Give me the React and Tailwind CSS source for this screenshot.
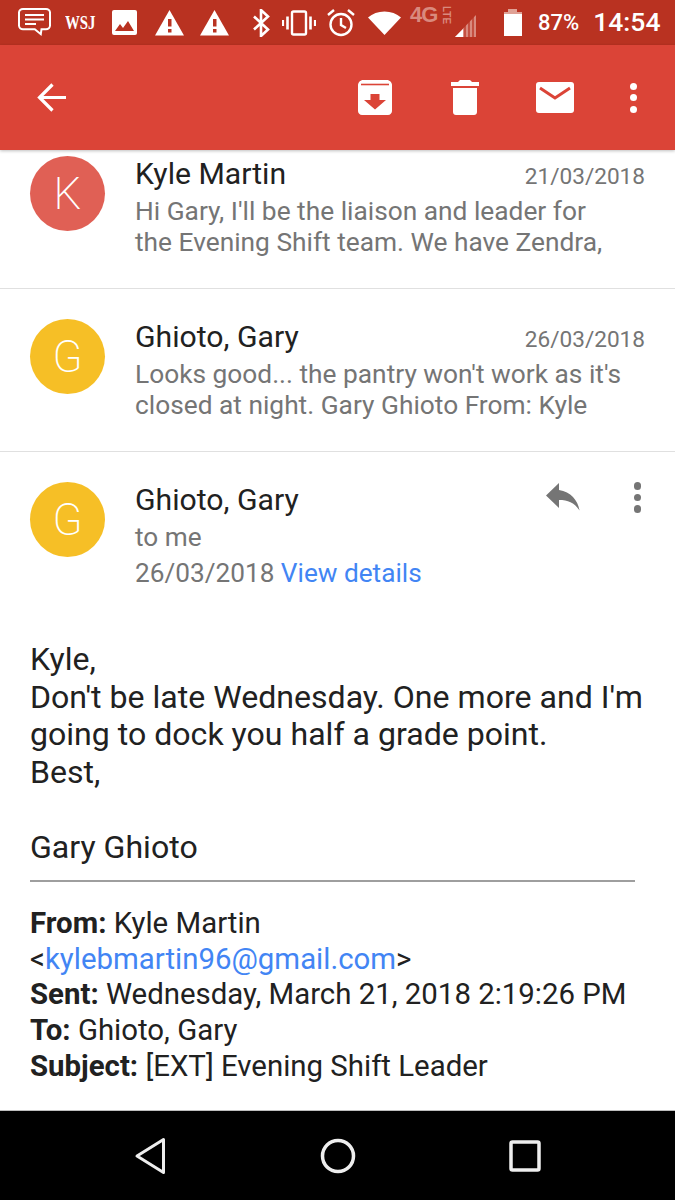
function StatusIcons() {
  return (
    <div className="flex h-[45px] shrink-0 items-center bg-[#b93221] pl-[18px] text-white">
      {/* chat bubble */}
      <svg width="34" height="30" viewBox="0 0 34 30" fill="none" stroke="white" strokeWidth="2" className="mt-[-1px]">
        <path d="M5 2h23c2.200 0 4 1.600 4 3.600v13c0 2-1.800 3.600-4 3.600h-4.500l-.7 5-6-5H5c-2.200 0-4-1.600-4-3.600v-13C1 3.600 2.800 2 5 2z" />
        <path d="M7 8h19M7 12.500h19M7 17h11" strokeWidth="1.800" />
      </svg>
      <span className="ml-[13px] w-[30px] origin-left scale-x-[.78] font-['Liberation_Serif'] text-[19px] leading-none font-bold whitespace-nowrap">WSJ</span>
      {/* picture */}
      <svg width="25" height="25" viewBox="0 0 25 25" className="ml-[17px]">
        <rect width="25" height="25" rx="2" fill="white" />
        <path d="M3 21l5-7 3 4 5-7 6 10z" fill="#b93221" />
      </svg>
      <Warning className="ml-[18px]" />
      <Warning className="ml-[16px]" />
      {/* bluetooth */}
      <svg width="18" height="28" viewBox="0 0 18 28" fill="none" stroke="white" strokeWidth="2.600" className="ml-[23px]">
        <path d="M2 7.500l14 13-7 6.500V1l7 6.500-14 13" />
      </svg>
      {/* vibrate */}
      <svg width="34" height="26" viewBox="0 0 34 26" fill="none" stroke="white" className="ml-[12px]">
        <rect x="10" y="1.500" width="14" height="23" rx="1.500" strokeWidth="2.400" />
        <path d="M5.500 6.500v13M28.500 6.500v13" strokeWidth="2.600" />
        <path d="M1 10v6M33 10v6" strokeWidth="2.200" />
      </svg>
      {/* alarm */}
      <svg width="30" height="30" viewBox="0 0 30 30" fill="none" stroke="white" strokeWidth="2.400" className="ml-[10px]">
        <circle cx="15" cy="16.500" r="10.500" />
        <path d="M15 10v7l5 3M2 7l6-5M28 7l-6-5" />
      </svg>
      {/* wifi */}
      <svg width="33" height="26" viewBox="0 0 33 26" className="ml-[12px]">
        <path d="M0 7.500C4.500 3.500 10 1.500 16.500 1.500S28.500 3.500 33 7.500L16.500 25z" fill="white" />
      </svg>
      <div className="relative ml-[9px] flex h-[45px] w-[67px] items-start">
        <span className="mt-[3px] font-['Liberation_Sans'] text-[22px] leading-[24px] font-bold tracking-[-1px] text-[#d98a7e]">4G</span>
        <span className="absolute top-[3px] left-[27px] rotate-90 font-['Liberation_Sans'] text-[10px] leading-[24px] font-bold text-[#d98a7e]">LTE</span>
        <svg width="24" height="24" viewBox="0 0 24 24" className="absolute top-[14px] left-[44px]">
          <path d="M22 1v22H1z" fill="#d98a7e" />
          <path d="M9 15v8H1z" fill="white" />
          <path d="M11 11v12M15 7v16M19 3v20" stroke="#b93221" strokeWidth="1.300" />
        </svg>
      </div>
      {/* battery */}
      <svg width="20" height="27" viewBox="0 0 20 27" className="ml-[26px]">
        <path d="M5 0h9v3H5z" fill="#e0a195" />
        <path d="M1 3h18v2H1z" fill="#e0a195" />
        <rect x="1" y="5" width="18" height="22" fill="white" />
      </svg>
      <span className="ml-[15px] font-['Roboto'] text-[22px] leading-none font-medium">87%</span>
      <span className="ml-[14px] font-['Roboto'] text-[26.500px] leading-none font-medium">14:54</span>
    </div>
  )
}

function Warning({ className }) {
  return (
    <svg width="29" height="26" viewBox="0 0 29 26" className={className}>
      <path d="M14.500 0L29 25.500H0z" fill="white" />
      <path d="M13 9h3.500v7.500H13zM13 19h3.500v3.500H13z" fill="#b93221" />
    </svg>
  )
}

function ActionBar() {
  return (
    <div className="flex h-[105px] shrink-0 items-center bg-[#db4437] pl-[36px] shadow-[0_1px_3px_rgba(0,0,0,0.25)]">
      <svg width="31" height="31" viewBox="0 0 31 31" fill="none" stroke="white" strokeWidth="3.200">
        <path d="M30 15.500H4M16.500 2.500l-13 13 13 13" />
      </svg>
      <svg width="34" height="35" viewBox="0 0 34 35" className="ml-[291px]">
        <path d="M5 0h24c2.500 0 5 2.500 5 5v26c0 2.200-1.800 4-4 4H4c-2.200 0-4-1.800-4-4V5c0-2.500 2.500-5 5-5z" fill="white" />
        <path d="M3 4.500h28" stroke="#db4437" strokeWidth="1.600" />
        <path d="M12.500 14h9v6H28L17 29.500 6 20h6.500z" fill="#db4437" />
      </svg>
      <svg width="28" height="35" viewBox="0 0 28 35" className="ml-[59px]">
        <path d="M9 0h10l2 2h7v4H0V2h7zM2 8h24v24c0 1.700-1.300 3-3 3H5c-1.700 0-3-1.300-3-3z" fill="white" />
      </svg>
      <svg width="38" height="31" viewBox="0 0 38 31" className="ml-[57px]">
        <rect width="38" height="31" rx="3" fill="white" />
        <path d="M4 6l15 10L34 6" fill="none" stroke="#db4437" strokeWidth="3" />
      </svg>
      <div className="ml-[56px] flex flex-col gap-[4.500px]">
        <div className="size-[7px] rounded-full bg-white" />
        <div className="size-[7px] rounded-full bg-white" />
        <div className="size-[7px] rounded-full bg-white" />
      </div>
    </div>
  )
}

function Avatar({ letter, color }) {
  return (
    <div className={`flex size-[75px] shrink-0 items-center justify-center rounded-full font-['Roboto'] text-[44px] leading-none font-[200] text-white ${color}`}>
      {letter}
    </div>
  )
}

function ConversationRow({ letter, color, name, date, line1, line2, className }) {
  return (
    <div className={`flex border-b border-[#e0e0e0] pr-[30px] pl-[30px] ${className}`}>
      <Avatar letter={letter} color={color} />
      <div className="ml-[30px] min-w-0 flex-1">
        <div className="flex items-start justify-between">
          <span className="text-[30.200px] leading-[35px] text-[#212121]">{name}</span>
          <span className="mt-[2.500px] text-[22.600px] leading-[35px] text-[#757575]">{date}</span>
        </div>
        <p className="mt-[2.500px] text-[26.300px] leading-[31px] whitespace-nowrap text-[#757575]">{line1}</p>
        <p className="text-[26.300px] leading-[31px] whitespace-nowrap text-[#757575]">{line2}</p>
      </div>
    </div>
  )
}

function MessageHeader() {
  return (
    <div className="flex pt-[30px] pr-[34px] pl-[30px]">
      <Avatar letter="G" color="bg-[#f6bf26]" />
      <div className="ml-[30px] flex-1">
        <div className="flex items-start justify-between">
          <span className="text-[30.200px] leading-[35px] text-[#212121]">Ghioto, Gary</span>
          <div className="flex items-center">
            <svg width="34" height="28" viewBox="0 0 34 28">
              <path d="M13 7V0L0 12.500 13 25v-8c9 0 15.500 2.500 20.500 10.500C32 17.500 25 9 13 7z" fill="#757575" />
            </svg>
            <div className="ml-[54px] flex flex-col gap-[4px]">
              <div className="size-[7.500px] rounded-full bg-[#757575]" />
              <div className="size-[7.500px] rounded-full bg-[#757575]" />
              <div className="size-[7.500px] rounded-full bg-[#757575]" />
            </div>
          </div>
        </div>
        <p className="mt-[2px] text-[26.200px] leading-[36px] text-[#757575]">to me</p>
        <p className="text-[26.200px] leading-[36px] text-[#757575]">
          26/03/2018 <span className="text-[#4285f4]">View details</span>
        </p>
      </div>
    </div>
  )
}

function MessageBody() {
  return (
    <div className="mt-[50px] pr-[40px] pl-[30px]">
      <div className="text-[32.100px] leading-[37.600px] text-[#212121]">
        <p>Kyle,</p>
        <p className="whitespace-nowrap">Don't be late Wednesday. One more and I'm</p>
        <p>going to dock you half a grade point.</p>
        <p>Best,</p>
        <p>&nbsp;</p>
        <p>Gary Ghioto</p>
      </div>
      <div className="mt-[13px] h-[2px] bg-[#9e9e9e]" />
      <div className="mt-[24.500px] text-[29.400px] leading-[35.700px] whitespace-nowrap text-[#212121]">
        <p><b className="font-bold">From:</b> Kyle Martin</p>
        <p>&lt;<span className="text-[#4285f4]">kylebmartin96@gmail.com</span>&gt;</p>
        <p><b className="font-bold">Sent:</b> Wednesday, March 21, 2018 2:19:26 PM</p>
        <p><b className="font-bold">To:</b> Ghioto, Gary</p>
        <p><b className="font-bold">Subject:</b> [EXT] Evening Shift Leader</p>
      </div>
    </div>
  )
}

function NavBar() {
  return (
    <div className="flex h-[90px] shrink-0 items-center border-t border-[#bdbdbd] bg-black pl-[134px]">
      <svg width="32" height="46" viewBox="0 0 32 46" fill="none" stroke="#eeeeee" strokeWidth="3" strokeLinejoin="round">
        <path d="M29.500 6.500v33L3 23z" />
      </svg>
      <svg width="36" height="46" viewBox="0 0 36 46" fill="none" stroke="#eeeeee" strokeWidth="3.500" className="ml-[154px]">
        <circle cx="18" cy="23" r="15.500" />
      </svg>
      <svg width="32" height="46" viewBox="0 0 32 46" fill="none" stroke="#eeeeee" strokeWidth="3.500" className="ml-[153px]">
        <rect x="2" y="9" width="28" height="28" rx="1.500" />
      </svg>
    </div>
  )
}

export default function App() {
  return (
    <div className="flex h-[1200px] w-[675px] flex-col overflow-hidden bg-white font-['Roboto',sans-serif]">
      <StatusIcons />
      <ActionBar />
      <div className="flex-1 overflow-hidden">
        <ConversationRow
          letter="K"
          color="bg-[#e06055]"
          name="Kyle Martin"
          date="21/03/2018"
          line1="Hi Gary, I'll be the liaison and leader for"
          line2="the Evening Shift team. We have Zendra,"
          className="h-[139px] pt-[6px]"
        />
        <ConversationRow
          letter="G"
          color="bg-[#f6bf26]"
          name="Ghioto, Gary"
          date="26/03/2018"
          line1="Looks good... the pantry won't work as it's"
          line2="closed at night. Gary Ghioto From: Kyle"
          className="h-[163px] pt-[30px]"
        />
        <MessageHeader />
        <MessageBody />
      </div>
      <NavBar />
    </div>
  )
}
